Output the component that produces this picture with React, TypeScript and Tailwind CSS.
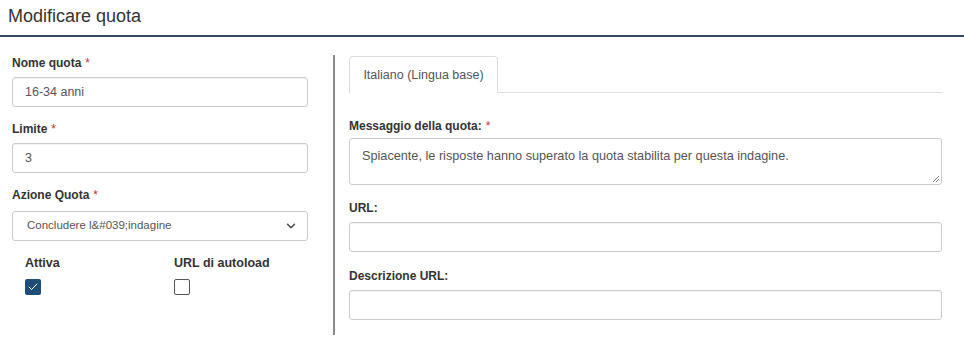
import { ChevronDown, Check } from "lucide-react";

function Label({ text, required, mb = "mb-[5px]" }: { text: string; required?: boolean; mb?: string }) {
  return (
    <div className={`text-[12px] font-bold text-[#333] leading-[17px] ${mb}`}>
      {text}
      {required && <span className="text-[#c9302c] font-normal ml-[4px] text-[12px] align-top">*</span>}
    </div>
  );
}

function TextBox({ value }: { value?: string }) {
  return (
    <div className="h-[30px] border border-[#ccc] rounded-[3px] bg-white px-[12px] flex items-center text-[12.5px] text-[#555] shadow-[inset_0_1px_1px_rgba(0,0,0,0.06)]">
      {value}
    </div>
  );
}

export default function App() {
  return (
    <div className="w-[964px] h-[355px] bg-white font-['Liberation_Sans',Arial,sans-serif] overflow-hidden">
      <div className="h-[37px] border-b-2 border-[#34495e] pl-[8px] pt-[5px]">
        <div className="text-[18px] text-[#333] leading-[22px]">Modificare quota</div>
      </div>

      <div className="flex pt-[17px]">
        {/* left column */}
        <div className="w-[296px] ml-[12px] pt-[1px]">
          <Label text="Nome quota" required />
          <TextBox value="16-34 anni" />
          <div className="h-[14px]" />
          <Label text="Limite" required />
          <TextBox value="3" />
          <div className="h-[14px]" />
          <Label text="Azione Quota" required mb="mb-[7px]" />
          <div className="h-[30px] border border-[#ccc] rounded-[3px] pl-[14px] pr-[12px] flex items-center justify-between text-[11.5px] text-[#555]">
            <span>Concludere l&amp;#039;indagine</span>
            <ChevronDown size={14} strokeWidth={2.5} className="text-[#444] -mr-[3px]" />
          </div>

          <div className="flex mt-[14px] pl-[13px]">
            <div className="w-[149px]">
              <div className="text-[12.5px] font-bold text-[#333] leading-[17px] mb-[7px]">Attiva</div>
              <div className="w-[16px] h-[16px] rounded-[2px] bg-[#1f4d7a] flex items-center justify-center">
                <Check size={12} strokeWidth={2} className="text-white" />
              </div>
            </div>
            <div>
              <div className="text-[12.5px] font-bold text-[#333] leading-[17px] mb-[7px]">URL di autoload</div>
              <div className="w-[16px] h-[16px] rounded-[2px] border border-[#555] bg-white" />
            </div>
          </div>
        </div>

        {/* divider */}
        <div className="w-[2px] h-[280px] bg-[#8a8a8a] ml-[25px] mt-[1px]" />

        {/* right column */}
        <div className="w-[593px] ml-[14px]">
          <div className="flex items-end">
            <div className="w-[149px] h-[37px] border border-[#ddd] border-b-0 rounded-t-[4px] flex items-center justify-center text-[12.5px] text-[#555] mt-[2px]">
              Italiano (Lingua base)
            </div>
            <div className="flex-1 border-b border-[#ddd]" />
          </div>

          <div className="mt-[25px]">
            <Label text="Messaggio della quota:" required mb="mb-[3px]" />
            <div className="relative h-[47px] border border-[#ccc] rounded-[3px] px-[12px] pt-[8px] text-[12.7px] text-[#555]">
              Spiacente, le risposte hanno superato la quota stabilita per questa indagine.
              <svg className="absolute right-[1px] bottom-[1px]" width="9" height="9" viewBox="0 0 9 9">
                <path d="M8 2 L2 8 M8 5 L5 8" stroke="#777" strokeWidth="1" />
              </svg>
            </div>
          </div>

          <div className="mt-[15px]">
            <Label text="URL:" />
            <TextBox />
          </div>

          <div className="mt-[16px]">
            <Label text="Descrizione URL:" />
            <TextBox />
          </div>
        </div>
      </div>
    </div>
  );
}
